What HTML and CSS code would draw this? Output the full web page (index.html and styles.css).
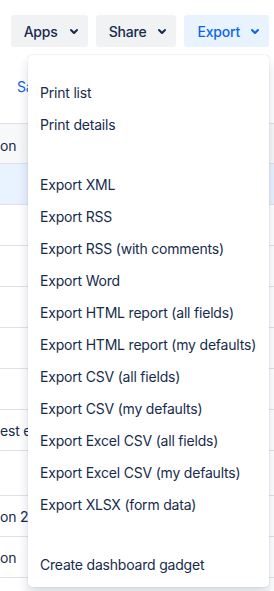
FILE: index.html
```html
<!DOCTYPE html>
<html lang="en">
<head>
<meta charset="utf-8">
<title>Issues</title>
<link rel="stylesheet" href="styles.css">
</head>
<body>
<div class="page">
  <div class="toolbar">
    <button class="btn">Apps<svg class="chev" viewBox="0 0 24 24"><path d="M8.292 10.293a1.009 1.009 0 000 1.419l2.939 2.965c.218.215.5.322.779.322s.556-.107.769-.322l2.93-2.955a1.01 1.01 0 000-1.419.987.987 0 00-1.406 0l-2.298 2.317-2.307-2.327a.99.99 0 00-1.406 0z"/></svg></button>
    <button class="btn">Share<svg class="chev" viewBox="0 0 24 24"><path d="M8.292 10.293a1.009 1.009 0 000 1.419l2.939 2.965c.218.215.5.322.779.322s.556-.107.769-.322l2.93-2.955a1.01 1.01 0 000-1.419.987.987 0 00-1.406 0l-2.298 2.317-2.307-2.327a.99.99 0 00-1.406 0z"/></svg></button>
    <button class="btn btn-selected">Export<svg class="chev" viewBox="0 0 24 24"><path d="M8.292 10.293a1.009 1.009 0 000 1.419l2.939 2.965c.218.215.5.322.779.322s.556-.107.769-.322l2.93-2.955a1.01 1.01 0 000-1.419.987.987 0 00-1.406 0l-2.298 2.317-2.307-2.327a.99.99 0 00-1.406 0z"/></svg></button>
  </div>
  <div class="links"><a class="link" href="#">Save as</a></div>
  <div class="grid">
    <div class="row head"><span class="cell">on</span></div>
    <div class="row sel"><span class="cell"></span></div>
    <div class="row"><span class="cell"></span></div>
    <div class="row"><span class="cell"></span></div>
    <div class="row"><span class="cell"></span></div>
    <div class="row"><span class="cell"></span></div>
    <div class="row"><span class="cell"></span></div>
    <div class="row"><span class="cell">est e</span></div>
    <div class="row tall"><span class="cell"></span></div>
    <div class="row"><span class="cell">on 2</span></div>
    <div class="row"><span class="cell">on</span></div>
    <div class="row"><span class="cell"></span></div>
  </div>

  <div class="menu" role="menu">
    <div class="group">
      <div class="item">Print list</div>
      <div class="item">Print details</div>
    </div>
    <div class="group">
      <div class="item">Export XML</div>
      <div class="item">Export RSS</div>
      <div class="item">Export RSS (with comments)</div>
      <div class="item">Export Word</div>
      <div class="item">Export HTML report (all fields)</div>
      <div class="item">Export HTML report (my defaults)</div>
      <div class="item">Export CSV (all fields)</div>
      <div class="item">Export CSV (my defaults)</div>
      <div class="item">Export Excel CSV (all fields)</div>
      <div class="item">Export Excel CSV (my defaults)</div>
      <div class="item">Export XLSX (form data)</div>
    </div>
    <div class="group">
      <div class="item">Create dashboard gadget</div>
    </div>
  </div>
</div>
</body>
</html>
```

FILE: styles.css
```css
* { box-sizing: border-box; }
html, body { margin: 0; padding: 0; background: #ffffff; }
body {
  font-family: Inter, "Noto Sans", sans-serif;
  font-size: 14px;
  letter-spacing: -0.2px;
  color: #172b4d;
  overflow: hidden;
}
.page { position: relative; width: 274px; height: 591px; overflow: hidden; }

.toolbar {
  display: flex;
  justify-content: flex-end;
  gap: 8px;
  padding: 15px 5px 0 0;
}
.btn {
  display: inline-flex;
  align-items: center;
  height: 32px;
  padding: 0 2px 0 13px;
  gap: 4px;
  border: 0;
  border-radius: 3px;
  background: #f1f2f4;
  color: #172b4d;
  font-family: inherit;
  font-size: 14px;
  letter-spacing: -0.2px;
  font-weight: 500;
}
.btn-selected { background: #e9f2ff; color: #0c66e4; gap: 3px; }
.chev { width: 24px; height: 24px; fill: currentColor; }

.links { padding: 30px 0 0 17px; height: 76px; line-height: 20px; }
.link { color: #0c66e4; text-decoration: none; font-size: 14px; }

.grid { border-top: 1px solid #dfe1e6; }
.row {
  display: flex;
  align-items: center;
  height: 41px;
  border-bottom: 1px solid #dfe1e6;
}
.row.head { height: 40px; background: #f7f8f9; padding-top: 3px; }
.row.sel { background: #e9f2ff; }
.row.tall { height: 45px; }
.cell { white-space: nowrap; }

.menu {
  position: absolute;
  top: 55px;
  left: 28px;
  width: 241px;
  padding: 21px 0 7px;
  background: #ffffff;
  border-radius: 4px;
  box-shadow: 0 8px 12px rgba(9, 30, 66, 0.15), 0 0 1px rgba(9, 30, 66, 0.31);
  display: flex;
  flex-direction: column;
  gap: 28px;
}
.item {
  height: 32px;
  display: flex;
  align-items: center;
  padding: 0 12px;
  white-space: nowrap;
  color: #172b4d;
}
```
